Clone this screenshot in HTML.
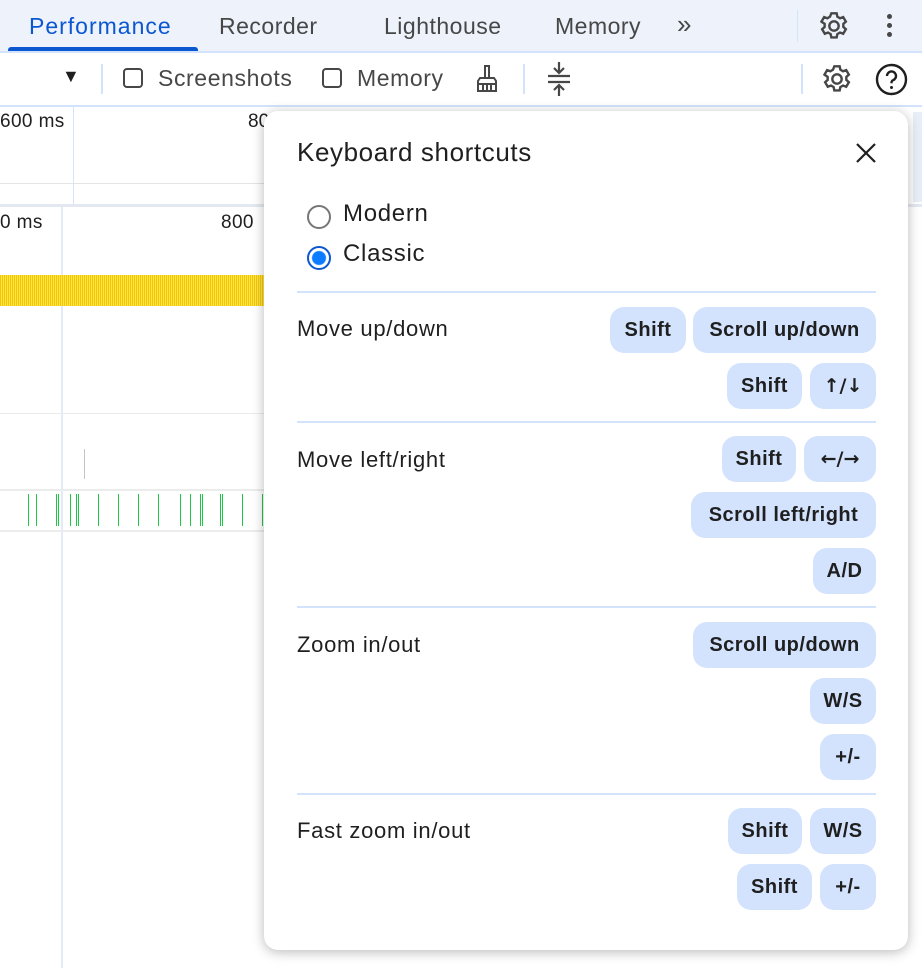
<!DOCTYPE html>
<html><head><style>
body{margin:0;width:922px;height:968px;overflow:hidden;background:#fff;font-family:"Liberation Sans",Arial,sans-serif;position:relative;color:#1f1f1f}
.a{position:absolute}
.tab{position:absolute;top:13px;font-size:23px;letter-spacing:0.5px;color:#474747}
.k{position:absolute;height:46px;border-radius:14px;background:#d3e3fd;font-size:20px;font-weight:bold;letter-spacing:0.5px;color:#1f1f1f;display:flex;align-items:center;justify-content:center;box-sizing:border-box}
.k.ar{font-family:"DejaVu Sans",sans-serif;font-size:19px;letter-spacing:0}
.lbl{position:absolute;left:297px;font-size:22px;letter-spacing:0.7px;color:#1f1f1f}
.div{position:absolute;left:297px;width:579px;height:2px;background:#d3e3fd}
.g{position:absolute;top:494px;width:1px;height:32px;background:#1ec845}
</style></head><body>
<!-- tab bar -->
<div class="a" style="left:0;top:0;width:922px;height:51px;background:#edf2fb;border-bottom:2px solid #d3e3fd"></div>
<div class="tab" style="left:29px;color:#0b57d0;letter-spacing:1px">Performance</div>
<div class="a" style="left:8px;top:47px;width:190px;height:4px;background:#0b57d0;border-radius:3px 3px 0 0"></div>
<div class="tab" style="left:219px">Recorder</div>
<div class="tab" style="left:384px">Lighthouse</div>
<div class="tab" style="left:555px">Memory</div>
<div class="tab" style="left:677px;font-size:26px;top:9px">»</div>
<div class="a" style="left:797px;top:10px;width:1px;height:32px;background:#d3e3fd"></div>
<svg class="a" style="left:818px;top:10px" width="32" height="32" viewBox="0 0 24 24"><path fill="none" stroke="#474747" stroke-width="1.8" d="M12 8.5a3.5 3.5 0 1 0 0 7a3.5 3.5 0 1 0 0-7zM10 2.5h4l.5 2.5 2 1.2 2.4-.9 2 3.4-1.9 1.7v2.3l1.9 1.7-2 3.4-2.4-.9-2 1.2-.5 2.5h-4l-.5-2.5-2-1.2-2.4.9-2-3.4 1.9-1.7v-2.3L2.6 8.7l2-3.4 2.4.9 2-1.2z"/></svg>
<div class="a" style="left:887px;top:14px;width:5px;height:5px;border-radius:50%;background:#474747;box-shadow:0 9px 0 #474747,0 18px 0 #474747"></div>
<!-- toolbar -->
<div class="a" style="left:0;top:53px;width:922px;height:52px;background:#fff;border-bottom:2px solid #d3e3fd"></div>
<div class="a" style="left:62px;top:66px;font-size:18px;color:#1f1f1f">▼</div>
<div class="a" style="left:101px;top:64px;width:2px;height:30px;background:#d3e3fd"></div>
<div class="a" style="left:123px;top:68px;width:20px;height:20px;border:2px solid #474747;border-radius:4px;box-sizing:border-box"></div>
<div class="a" style="left:158px;top:65px;font-size:23px;letter-spacing:0.6px;color:#474747">Screenshots</div>
<div class="a" style="left:322px;top:68px;width:20px;height:20px;border:2px solid #474747;border-radius:4px;box-sizing:border-box"></div>
<div class="a" style="left:357px;top:65px;font-size:23px;letter-spacing:0.6px;color:#474747">Memory</div>
<svg class="a" style="left:472px;top:63px" width="30" height="32" viewBox="0 0 30 32"><path fill="none" stroke="#474747" stroke-width="2" d="M13 3h4v12h-4zM8 15h14l2 3v10H6V18zM6 21h18M11 21v7M15 21v7M19 21v7"/></svg>
<div class="a" style="left:523px;top:64px;width:2px;height:30px;background:#d3e3fd"></div>
<svg class="a" style="left:545px;top:60px" width="28" height="38" viewBox="0 0 28 38"><path fill="none" stroke="#474747" stroke-width="2.2" d="M3 16h22M3 22h22M14 2v10M9 8l5 5 5-5M14 36V26M9 30l5-5 5 5"/></svg>
<div class="a" style="left:801px;top:64px;width:2px;height:30px;background:#d3e3fd"></div>
<svg class="a" style="left:821px;top:63px" width="32" height="32" viewBox="0 0 24 24"><path fill="none" stroke="#474747" stroke-width="1.8" d="M12 8.5a3.5 3.5 0 1 0 0 7a3.5 3.5 0 1 0 0-7zM10 2.5h4l.5 2.5 2 1.2 2.4-.9 2 3.4-1.9 1.7v2.3l1.9 1.7-2 3.4-2.4-.9-2 1.2-.5 2.5h-4l-.5-2.5-2-1.2-2.4.9-2-3.4 1.9-1.7v-2.3L2.6 8.7l2-3.4 2.4.9 2-1.2z"/></svg>
<svg class="a" style="left:875px;top:63px" width="33" height="33" viewBox="0 0 33 33"><circle cx="16.5" cy="16.5" r="14.5" fill="none" stroke="#1f1f1f" stroke-width="2.4"/><path fill="none" stroke="#1f1f1f" stroke-width="2.4" d="M12 13a4.5 4.5 0 1 1 6 4.2c-1.3.6-1.5 1.3-1.5 3"/><circle cx="16.5" cy="24.5" r="1.5" fill="#1f1f1f"/></svg>
<!-- overview -->
<div class="a" style="left:0;top:111px;font-size:19px;letter-spacing:0.4px">600 ms</div>
<div class="a" style="left:248px;top:111px;font-size:19px">80</div>
<div class="a" style="left:73px;top:107px;width:1px;height:98px;background:#d3e3fd"></div>
<div class="a" style="left:0;top:183px;width:300px;height:1px;background:#e4e4e4"></div>
<div class="a" style="left:0;top:204px;width:922px;height:3px;background:#e4e8f0"></div>
<div class="a" style="left:913px;top:112px;width:9px;height:90px;background:#e8eef8"></div>
<!-- main -->
<div class="a" style="left:0;top:212px;font-size:19px;letter-spacing:0.4px">0 ms</div>
<div class="a" style="left:221px;top:212px;font-size:19px;letter-spacing:0.4px">800</div>
<div class="a" style="left:61px;top:207px;width:2px;height:761px;background:#e3eaf8"></div>
<div class="a" style="left:0;top:275px;width:270px;height:31px;background:repeating-linear-gradient(90deg,#f4c800 0 1px,#ffe44d 1px 2px)"></div>
<div class="a" style="left:0;top:413px;width:270px;height:1px;background:#ececec"></div>
<div class="a" style="left:0;top:489px;width:270px;height:2px;background:#ececec"></div>
<div class="a" style="left:0;top:530px;width:270px;height:2px;background:#ececec"></div>
<div class="a" style="left:84px;top:449px;width:1px;height:30px;background:#c4c4c4"></div>
<div class="g" style="left:28px"></div><div class="g" style="left:36px"></div><div class="g" style="left:56px"></div><div class="g" style="left:58px"></div><div class="g" style="left:70px"></div><div class="g" style="left:76px"></div><div class="g" style="left:78px"></div><div class="g" style="left:98px"></div><div class="g" style="left:118px"></div><div class="g" style="left:138px"></div><div class="g" style="left:158px"></div><div class="g" style="left:180px"></div><div class="g" style="left:190px"></div><div class="g" style="left:200px"></div><div class="g" style="left:202px"></div><div class="g" style="left:220px"></div><div class="g" style="left:222px"></div><div class="g" style="left:242px"></div><div class="g" style="left:262px"></div>
<!-- dialog -->
<div class="a" style="left:264px;top:111px;width:644px;height:839px;background:#fff;border-radius:14px;box-shadow:0 2px 12px rgba(0,0,0,.28)"></div>
<div class="a" style="left:297px;top:137px;font-size:26px;font-weight:500;letter-spacing:0.6px;color:#1f1f1f">Keyboard shortcuts</div>
<svg class="a" style="left:855px;top:142px" width="22" height="22" viewBox="0 0 22 22"><path stroke="#1f1f1f" stroke-width="2.2" d="M2 2l18 18M20 2L2 20"/></svg>
<div class="a" style="left:307px;top:205px;width:24px;height:24px;border:2px solid #747775;border-radius:50%;box-sizing:border-box"></div>
<div class="a" style="left:343px;top:200px;font-size:24px;letter-spacing:0.7px">Modern</div>
<div class="a" style="left:307px;top:246px;width:24px;height:24px;border:2px solid #0b57d0;border-radius:50%;box-sizing:border-box;background:radial-gradient(circle,#0b7cff 0 6.5px,#fff 7.5px)"></div>
<div class="a" style="left:343px;top:240px;font-size:24px;letter-spacing:0.7px">Classic</div>
<div class="div" style="top:291px"></div>
<div class="lbl" style="top:316px">Move up/down</div>
<div class="k" style="left:610px;top:307px;width:76px">Shift</div>
<div class="k" style="left:693px;top:307px;width:183px">Scroll up/down</div>
<div class="k" style="left:727px;top:363px;width:75px">Shift</div>
<div class="k ar" style="left:810px;top:363px;width:66px">↑/↓</div>
<div class="div" style="top:421px"></div>
<div class="lbl" style="top:447px">Move left/right</div>
<div class="k" style="left:722px;top:436px;width:74px">Shift</div>
<div class="k ar" style="left:804px;top:436px;width:72px">←/→</div>
<div class="k" style="left:691px;top:492px;width:185px">Scroll left/right</div>
<div class="k" style="left:813px;top:548px;width:63px">A/D</div>
<div class="div" style="top:606px"></div>
<div class="lbl" style="top:632px">Zoom in/out</div>
<div class="k" style="left:693px;top:622px;width:183px">Scroll up/down</div>
<div class="k" style="left:810px;top:678px;width:66px">W/S</div>
<div class="k" style="left:820px;top:734px;width:56px">+/-</div>
<div class="div" style="top:793px"></div>
<div class="lbl" style="top:818px">Fast zoom in/out</div>
<div class="k" style="left:728px;top:808px;width:74px">Shift</div>
<div class="k" style="left:810px;top:808px;width:66px">W/S</div>
<div class="k" style="left:737px;top:864px;width:75px">Shift</div>
<div class="k" style="left:820px;top:864px;width:56px">+/-</div>
</body></html>
